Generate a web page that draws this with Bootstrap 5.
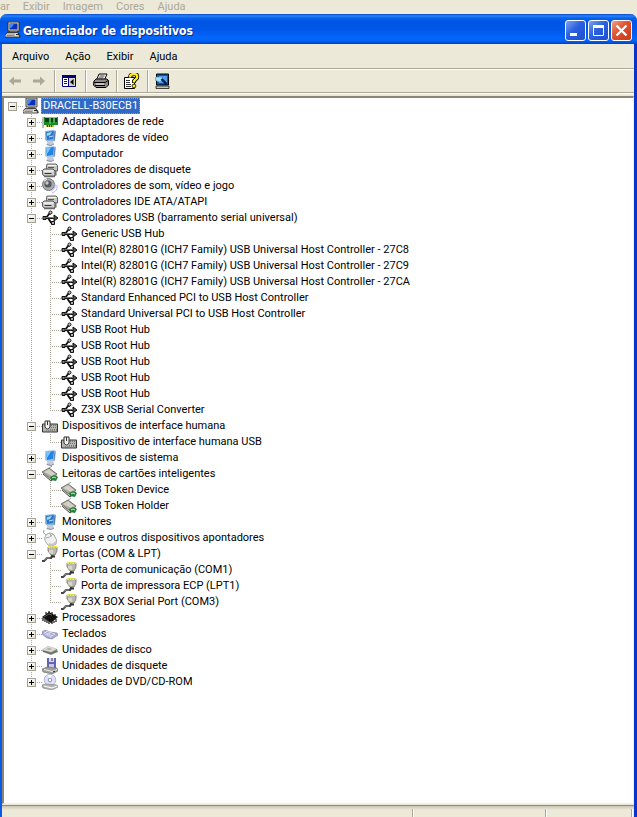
<!DOCTYPE html>
<html lang="pt-BR">
<head>
<meta charset="utf-8">
<meta name="viewport" content="width=device-width, initial-scale=1">
<title>Gerenciador de dispositivos</title>
<link href="https://cdn.jsdelivr.net/npm/bootstrap@5.3.0/dist/css/bootstrap.min.css" rel="stylesheet">
<style>
:root { --face:#ece9d8; --shade:#aca899; }
body { background:var(--face); color:#000; font-family:Roboto,sans-serif; font-size:11px; line-height:16px; }
.behind { height:14px; gap:13px; overflow:hidden; }
.behind a { color:var(--shade); line-height:14px; }
.win { border:solid; border-width:0 3px 0 2px; border-color:#1c62e4 #0a35c8 #1c62e4 #0a5ae8; border-radius:7px 7px 0 0; background:var(--face); }
.caption { height:30px; margin:0 -3px 0 -2px; padding:0 5px; border-radius:7px 7px 0 0; background:linear-gradient(#0a4ac8 0,#2a82f5 2px,#0862ee 4px,#0054e3 8px,#0058ea 16px,#0466fc 24px,#0262f4 27px,#0040c0 30px); }
.caption h1 { padding:4px 0 0 2px; font-family:"DejaVu Sans Condensed","DejaVu Sans",sans-serif; font-size:12px; font-weight:700; line-height:20px; color:#fff; text-shadow:1px 1px #0a2f8c; }
.caption .ico { margin-top:2px; }
.capbtns { gap:2px; padding-top:3px; }
.capbtn { width:21px; height:21px; border:1px solid #fff; border-radius:3px; background:linear-gradient(135deg,#7ca4f0,#2a5fe0 45%,#1e4fd0); }
.capbtn.closer { background:linear-gradient(135deg,#f0a088,#e0502c 45%,#c83c18); }
.etched { border-bottom:1px solid var(--shade); box-shadow:0 1px #fff; margin-bottom:1px; }
.menus { height:25px; padding:1px 0 0 2px; }
.menus .btn { padding:0 8px; font-size:11px; line-height:16px; color:#000; border:0; border-radius:0; }
.tools { height:23px; padding-left:2px; }
.tools .btn { width:23px; height:22px; border:0; border-radius:0; }
.tools .vr { width:1px; margin:0 3px 0 4px; background:var(--shade); opacity:1; box-shadow:1px 0 #fff; }
.pane { margin-top:2px; border:solid; border-width:2px 1px 1px 2px; border-color:#8a8778 #f1efe2 #f1efe2 #8a8778; background:#fff; }
.tree ul { padding-left:19px; }
.tree li li { background:repeating-linear-gradient(#aaa698 0 1px,transparent 1px 2px) 8px 0/1px 100% no-repeat; }
.tree li li:last-child { background-size:1px 9px; }
.branch { width:19px; height:16px; padding:4px 0 0 4px; background:repeating-linear-gradient(90deg,#aaa698 0 1px,transparent 1px 2px) 8px 8px/11px 1px no-repeat; }
.twist { display:block; position:relative; width:9px; height:9px; padding:0; border:1px solid #a5a294; border-radius:0; background:linear-gradient(135deg,#fff,#e4e0d2); }
.twist::before { content:""; position:absolute; left:1px; top:3px; width:5px; height:1px; background:#000; }
.twist.shut::after { content:""; position:absolute; left:3px; top:1px; width:1px; height:5px; background:#000; }
.ico { width:16px; height:16px; flex:none; overflow:visible; }
.name { margin-left:2px; padding:0 2px; color:#000; text-decoration:none; white-space:nowrap; }
.name.chosen { background:#316ac5; color:#fff; outline:1px dotted #ce953a; outline-offset:-1px; }
.status { height:12px; border-top:1px solid #8f8c7c; background:linear-gradient(#c9c6b6,var(--face) 4px); margin-top:1px; padding-right:2px; }
.status div { border-right:1px solid var(--shade); margin-top:3px; box-shadow:1px 0 #fff; }
.status .mid { width:133px; } .status .end { width:86px; }
</style>
</head>
<body class="d-flex flex-column min-vh-100">
<svg class="d-none" xmlns="http://www.w3.org/2000/svg">
<symbol id="pc" viewBox="0 0 16 16"><path d="M3 0h11v9H3z" fill="#d8d5c8" stroke="#222" stroke-width=".8"/><path d="M4.500 1.500h8v6h-8z" fill="#0a2fb8"/><path d="M5 2h4L6 6H5z" fill="#4a8af0"/><path d="M5 9h7v1.500H5z" fill="#666"/><path d="M2 10.500h11l2 3v1.500H0v-1.500z" fill="#e4e1d4" stroke="#222" stroke-width=".8"/><path d="M2 12h8M1.500 13.500h8" stroke="#777" stroke-width=".8"/><path d="M11 12.500h3M13 11l2 4" stroke="#222"/></symbol>
<symbol id="net" viewBox="0 0 16 16"><path d="M1 3v11" stroke="#777"/><path d="M2 3h14v8H2z" fill="#178a28"/><path d="M3 4h4v4H3zM9 4h2v4H9zM13 4h2v4h-2z" fill="#0a3d12"/><path d="M3 3.500h12M8 4v6M12 4v5" stroke="#7ad36a"/><path d="M4 11h8v2H4z" fill="#c9b43c"/><path d="M5.500 11v2M7.500 11v2M9.500 11v2" stroke="#14611c"/></symbol>
<symbol id="mon" viewBox="0 0 16 16"><path d="M3 1l9-1 2 1-1 10-7 1-3-2z" fill="#a9c8ea"/><path d="M4 2l8-1-1 8-6 1z" fill="#1f86e8"/><path d="M4 2l5-.6L5 8z" fill="#7cc4fb"/><path d="M6 11h5l1 3-3 2-5-1z" fill="#c7cbd8"/><path d="M5 14.500l4 1 3-1.500" stroke="#8b8fa4" fill="none"/><path d="M13 1.500l-1 9" stroke="#6484bc"/></symbol>
<symbol id="adp" viewBox="0 0 16 16"><path d="M3 1l9-1 2 1-1 10-7 1-3-2z" fill="#8eb2dc"/><path d="M4 2l8-1-1 8-6 1z" fill="#2679c9"/><path d="M5 3l5-1-2 3-3 1z" fill="#9ad4f6"/><path d="M7 7l4-1" stroke="#bfe4fa"/><path d="M6 11h5l1 3-3 2-5-1z" fill="#c7cbd8"/><path d="M5 14.500l4 1 3-1.500" stroke="#8b8fa4" fill="none"/><path d="M13 1.500l-1 9" stroke="#5878a8"/></symbol>
<symbol id="ctl" viewBox="0 0 16 16"><path d="M5 2h9l1.500 1.500V9h-11V3.500z" fill="#c4c4c2" stroke="#666"/><path d="M6 3.500h8" stroke="#f4f4f4"/><path d="M6 5.500h6" stroke="#555"/><path d="M2 7h9l2 2v5H2L.5 12V8.500z" fill="#cfcfcd" stroke="#555"/><path d="M2 9h9" stroke="#fff"/><path d="M2.500 11.500h7" stroke="#333"/><path d="M13.800 8.500v5M2 14.600h11" stroke="#666" stroke-width="1.400"/></symbol>
<symbol id="snd" viewBox="0 0 16 16"><circle cx="6.500" cy="6.500" r="6" fill="#a9aaac" stroke="#77797d"/><circle cx="6" cy="6" r="3.600" fill="#55585c"/><circle cx="5" cy="5" r="1.700" fill="#c6c8ca"/><path d="M2 3l3-2" stroke="#eee"/><path d="M13 6q1 5-4 7M15 7q1 6-5 8" stroke="#b5b4ee" fill="none"/></symbol>
<symbol id="usb" viewBox="0 0 16 16"><path d="M2 8h11M4 8l3.500-4.500H9M6 8l3 4.500h2" stroke="#111" stroke-width="1.800" fill="none"/><path d="M12 5L16 8l-4 3z" fill="#555" stroke="#111"/><path d="M1 6.500h3v3H1z" fill="#777" stroke="#111"/><path d="M4 7.600h8" stroke="#aaa" stroke-width=".7"/><circle cx="8.500" cy="2.500" r="1.500" fill="#ccc" stroke="#111"/><path d="M9.500 11.500h3v3h-3z" fill="#aaa" stroke="#111"/></symbol>
<symbol id="hid" viewBox="0 0 16 16"><path d="M.5 6h15v8H.5z" fill="#b4b4b0" stroke="#333"/><path d="M9 7.500h6M9 9.500h6M8 11.500h7M4 12.700h11" stroke="#777" stroke-dasharray="1 1"/><path d="M3 3h5v6q-2.500 4-5 0z" fill="#f2f2f0" stroke="#333"/><path d="M5.500 3v4" stroke="#333"/></symbol>
<symbol id="card" viewBox="0 0 16 16"><path d="M6 3l4-3" stroke="#999"/><path d="M0 6l7-4 8 6-5 6z" fill="#aaa89e" stroke="#5c5a52" stroke-width=".8"/><path d="M2 6l5-3 6 5-3 2z" fill="#d4d2c8"/><path d="M1 8l8 7 6-5" fill="none" stroke="#444"/><path d="M8 11l4-2 4 2-2 4-5-1z" fill="#23803a"/><path d="M10 12l2-1 2 1" stroke="#c5f3c0" fill="none"/></symbol>
<symbol id="mouse" viewBox="0 0 16 16"><path d="M4 5Q0 3 2 0" stroke="#999" fill="none"/><path d="M4 5q4-4 8 0 4 5 2 9-5 4-9 0-4-5-1-9z" fill="#f0f0ee" stroke="#a5a6ac"/><path d="M4 8q4 0 7-4M8 3l1 4" stroke="#aaa" fill="none"/><path d="M7 14q4 2 7-2" stroke="#c4c4ce" stroke-width="2" fill="none"/></symbol>
<symbol id="port" viewBox="0 0 16 16"><path d="M0 15h2l3-3h4l2-4" stroke="#444" stroke-width="2.200" fill="none"/><path d="M2 14l3-2h3" stroke="#aaa" stroke-width=".8" fill="none"/><path d="M6 1h9v4l-2 4H9L6 5z" fill="#bcbab0" stroke="#6f6e68" stroke-width=".8"/><path d="M8 4v3M10 4v4" stroke="#f2f1ea"/><path d="M6 1h9" stroke="#f1e63b" stroke-width="2" stroke-dasharray="2 .6"/><path d="M9 9.500h4v2H9z" fill="#333"/></symbol>
<symbol id="cpu" viewBox="0 0 16 16"><path d="M0 7l7-5 9 5-7 6z" fill="#111"/><path d="M1 8v3M3 9v3M5 10v3M7 11v3M10 12v2M12 11v2M14 9v3M4 2v2M7 1v2M10 2v2M13 4v2" stroke="#111" stroke-width="1.200"/><path d="M2 7l5-3 3 1" stroke="#777" fill="none" stroke-width=".7"/></symbol>
<symbol id="kbd" viewBox="0 0 16 16"><path d="M0 6l3-2 5 2 7 1 1 2-6 4-5-1-5-4z" fill="#a6a9d2" stroke="#8284a8" stroke-width=".7"/><path d="M2 6l9 4M4 5l9 3M3 8l6 3M5 9l4-3M8 11l5-3M2 8l3-3" stroke="#f4f4ff" stroke-width=".6"/></symbol>
<symbol id="hdd" viewBox="0 0 16 16"><path d="M0 8l6-4 9 3 1 3-7 3-8-3z" fill="#8c8c88"/><path d="M0 8l6-4 9 3-6 3z" fill="#dad9d2"/><path d="M4 7l3-1 3 1-2 1z" fill="#aaa"/><path d="M1 9l8 2.500 6-2.500" stroke="#666" fill="none"/><path d="M11 10h2" stroke="#5c9a50"/></symbol>
<symbol id="fdd" viewBox="0 0 16 16"><path d="M5 0h9v10H5z" fill="#6565ad"/><path d="M7 0h5v4H7z" fill="#dadaf0"/><path d="M7 6h5v4H7z" fill="#c8c8e8"/><path d="M10 0v3" stroke="#335"/><path d="M0 11l5-2 10 1 1 3-6 3-9-2z" fill="#a1a19c" stroke="#666" stroke-width=".6"/><path d="M2 11.500l8 2 5-2" stroke="#eee" fill="none"/><path d="M11 14l2-1" stroke="#222"/></symbol>
<symbol id="cd" viewBox="0 0 16 16"><circle cx="8" cy="6" r="5.800" fill="#dfe0f5" stroke="#a5a8ca" stroke-width=".8"/><path d="M8 6L6 1l4 0z" fill="#fff"/><circle cx="8" cy="6" r="1.800" fill="#fff" stroke="#8a8db4"/><path d="M0 11l4-1 11 1 1 2-6 3-9-2z" fill="#b5b5b3" stroke="#777" stroke-width=".6"/><path d="M2 12l8 2 5-2" stroke="#fff" fill="none"/></symbol>
<symbol id="back" viewBox="0 0 16 16"><path d="M1 8l5-4.500V6.500h7v3H6v3z" fill="#aca899"/></symbol>
<symbol id="fwd" viewBox="0 0 16 16"><path d="M14 8L9 3.500V6.500H2v3h7v3z" fill="#aca899"/></symbol>
<symbol id="panel" viewBox="0 0 16 16"><path d="M.5 2.500h13v11H.5z" fill="#fff" stroke="#000080"/><path d="M0 2h14v3H0z" fill="#000080"/><path d="M7 5h6v8H7z" fill="#d5d2c3"/><path d="M6.500 5v8" stroke="#000080"/><path d="M2 6.500h3M2 8.500h3M2 10.500h3" stroke="#222"/><path d="M11.500 6v6L8 9z" fill="#000"/></symbol>
<symbol id="print" viewBox="0 0 16 16"><path d="M6 1h8l-3 7H3z" fill="#fff" stroke="#000"/><path d="M6.500 3h5M5.500 5h5" stroke="#000" stroke-width=".8"/><path d="M1 8l2-2h11l1.500 1.500V12L13 14.500H3L.5 12z" fill="#8f8c84" stroke="#000"/><path d="M1 9.500h11l3-2M2 12.500h10" stroke="#000" fill="none"/><path d="M3 11h8" stroke="#fff"/></symbol>
<symbol id="help" viewBox="0 0 16 16"><path d="M.5 4.500h10v11H.5z" fill="#fff" stroke="#000"/><path d="M2 7.500h4M2 9.500h4M2 11.500h5M2 13.500h5" stroke="#333"/><path d="M6 5q0-4 4-4 4 0 3 4l-3 3v2" stroke="#000" stroke-width="4" fill="none"/><path d="M6 4.500q0-3.500 4-3.500 4 0 3 4l-3 3v1.500" stroke="#ffee12" stroke-width="2.400" fill="none"/><circle cx="10" cy="13" r="1.900" fill="#ffee12" stroke="#000" stroke-width=".8"/></symbol>
<symbol id="scan" viewBox="0 0 16 16"><path d="M1.500 1h12v11h-12z" fill="#1551b0" stroke="#000"/><path d="M4 3h8v7H4z" fill="#4f9fea"/><path d="M1 13h13v2.500H1z" fill="#c5c5bb" stroke="#000" stroke-width=".7"/><path d="M1 4h6v4L4 9 0 7z" fill="#a5e4fa" stroke="#3a9cd0" stroke-width=".7"/><path d="M6.500 6l5 5" stroke="#001a50" stroke-width="2.400"/></symbol>
</svg>

<nav class="behind d-flex" aria-label="Janela em segundo plano">
<a class="text-decoration-none" href="#">ar</a><a class="text-decoration-none" href="#">Exibir</a><a class="text-decoration-none" href="#">Imagem</a><a class="text-decoration-none" href="#">Cores</a><a class="text-decoration-none" href="#">Ajuda</a>
</nav>

<main class="win d-flex flex-column flex-grow-1">
<header class="caption d-flex align-items-center">
<svg class="ico"><use href="#pc"/></svg>
<h1 class="mb-0 me-auto text-nowrap">Gerenciador de dispositivos</h1>
<div class="capbtns d-flex">
<button class="btn p-0 capbtn d-flex" aria-label="Minimizar"><svg viewBox="0 0 19 19"><path d="M4 12h7v3H4z" fill="#fff"/></svg></button>
<button class="btn p-0 capbtn d-flex" aria-label="Maximizar"><svg viewBox="0 0 19 19"><path d="M4.500 5h10v9.500h-10z" fill="none" stroke="#fff"/><path d="M4 4h11v3H4z" fill="#fff"/></svg></button>
<button class="btn p-0 capbtn closer d-flex" aria-label="Fechar"><svg viewBox="0 0 19 19"><path d="M4.500 4.500l10 10M14.500 4.500l-10 10" stroke="#fff" stroke-width="2.200"/></svg></button>
</div>
</header>
<nav class="menus etched d-flex align-items-center" aria-label="Menu">
<button class="btn">Arquivo</button><button class="btn">Ação</button><button class="btn">Exibir</button><button class="btn">Ajuda</button>
</nav>
<div class="tools etched d-flex" role="toolbar" aria-label="Ferramentas">
<button class="btn p-0 d-flex align-items-center justify-content-center" aria-label="Voltar"><svg class="ico"><use href="#back"/></svg></button>
<button class="btn p-0 d-flex align-items-center justify-content-center" aria-label="Avançar"><svg class="ico"><use href="#fwd"/></svg></button>
<span class="vr"></span>
<button class="btn p-0 d-flex align-items-center justify-content-center" aria-label="Mostrar árvore"><svg class="ico"><use href="#panel"/></svg></button>
<span class="vr"></span>
<button class="btn p-0 d-flex align-items-center justify-content-center" aria-label="Imprimir"><svg class="ico"><use href="#print"/></svg></button>
<span class="vr"></span>
<button class="btn p-0 d-flex align-items-center justify-content-center" aria-label="Ajuda"><svg class="ico"><use href="#help"/></svg></button>
<span class="vr"></span>
<button class="btn p-0 d-flex align-items-center justify-content-center" aria-label="Verificar alterações"><svg class="ico"><use href="#scan"/></svg></button>
</div>

<section class="pane flex-grow-1">
<ul class="tree list-unstyled mb-0">
<li><div class="d-flex"><span class="branch"><button class="btn twist" aria-label="Recolher" data-bs-toggle="collapse" data-bs-target="#all"></button></span><svg class="ico"><use href="#pc"/></svg><a class="name chosen" href="#">DRACELL-B30ECB1</a></div>
<ul class="list-unstyled collapse show" id="all">
<li><div class="d-flex"><span class="branch"><button class="btn twist shut" aria-label="Expandir"></button></span><svg class="ico"><use href="#net"/></svg><a class="name" href="#">Adaptadores de rede</a></div></li>
<li><div class="d-flex"><span class="branch"><button class="btn twist shut" aria-label="Expandir"></button></span><svg class="ico"><use href="#adp"/></svg><a class="name" href="#">Adaptadores de vídeo</a></div></li>
<li><div class="d-flex"><span class="branch"><button class="btn twist shut" aria-label="Expandir"></button></span><svg class="ico"><use href="#mon"/></svg><a class="name" href="#">Computador</a></div></li>
<li><div class="d-flex"><span class="branch"><button class="btn twist shut" aria-label="Expandir"></button></span><svg class="ico"><use href="#ctl"/></svg><a class="name" href="#">Controladores de disquete</a></div></li>
<li><div class="d-flex"><span class="branch"><button class="btn twist shut" aria-label="Expandir"></button></span><svg class="ico"><use href="#snd"/></svg><a class="name" href="#">Controladores de som, vídeo e jogo</a></div></li>
<li><div class="d-flex"><span class="branch"><button class="btn twist shut" aria-label="Expandir"></button></span><svg class="ico"><use href="#ctl"/></svg><a class="name" href="#">Controladores IDE ATA/ATAPI</a></div></li>
<li><div class="d-flex"><span class="branch"><button class="btn twist" aria-label="Recolher" data-bs-toggle="collapse" data-bs-target="#usbs"></button></span><svg class="ico"><use href="#usb"/></svg><a class="name" href="#">Controladores USB (barramento serial universal)</a></div>
<ul class="list-unstyled collapse show" id="usbs">
<li><div class="d-flex"><span class="branch"></span><svg class="ico"><use href="#usb"/></svg><a class="name" href="#">Generic USB Hub</a></div></li>
<li><div class="d-flex"><span class="branch"></span><svg class="ico"><use href="#usb"/></svg><a class="name" href="#">Intel(R) 82801G (ICH7 Family) USB Universal Host Controller - 27C8</a></div></li>
<li><div class="d-flex"><span class="branch"></span><svg class="ico"><use href="#usb"/></svg><a class="name" href="#">Intel(R) 82801G (ICH7 Family) USB Universal Host Controller - 27C9</a></div></li>
<li><div class="d-flex"><span class="branch"></span><svg class="ico"><use href="#usb"/></svg><a class="name" href="#">Intel(R) 82801G (ICH7 Family) USB Universal Host Controller - 27CA</a></div></li>
<li><div class="d-flex"><span class="branch"></span><svg class="ico"><use href="#usb"/></svg><a class="name" href="#">Standard Enhanced PCI to USB Host Controller</a></div></li>
<li><div class="d-flex"><span class="branch"></span><svg class="ico"><use href="#usb"/></svg><a class="name" href="#">Standard Universal PCI to USB Host Controller</a></div></li>
<li><div class="d-flex"><span class="branch"></span><svg class="ico"><use href="#usb"/></svg><a class="name" href="#">USB Root Hub</a></div></li>
<li><div class="d-flex"><span class="branch"></span><svg class="ico"><use href="#usb"/></svg><a class="name" href="#">USB Root Hub</a></div></li>
<li><div class="d-flex"><span class="branch"></span><svg class="ico"><use href="#usb"/></svg><a class="name" href="#">USB Root Hub</a></div></li>
<li><div class="d-flex"><span class="branch"></span><svg class="ico"><use href="#usb"/></svg><a class="name" href="#">USB Root Hub</a></div></li>
<li><div class="d-flex"><span class="branch"></span><svg class="ico"><use href="#usb"/></svg><a class="name" href="#">USB Root Hub</a></div></li>
<li><div class="d-flex"><span class="branch"></span><svg class="ico"><use href="#usb"/></svg><a class="name" href="#">Z3X USB Serial Converter</a></div></li>
</ul></li>
<li><div class="d-flex"><span class="branch"><button class="btn twist" aria-label="Recolher" data-bs-toggle="collapse" data-bs-target="#hids"></button></span><svg class="ico"><use href="#hid"/></svg><a class="name" href="#">Dispositivos de interface humana</a></div>
<ul class="list-unstyled collapse show" id="hids">
<li><div class="d-flex"><span class="branch"></span><svg class="ico"><use href="#hid"/></svg><a class="name" href="#">Dispositivo de interface humana USB</a></div></li>
</ul></li>
<li><div class="d-flex"><span class="branch"><button class="btn twist shut" aria-label="Expandir"></button></span><svg class="ico"><use href="#mon"/></svg><a class="name" href="#">Dispositivos de sistema</a></div></li>
<li><div class="d-flex"><span class="branch"><button class="btn twist" aria-label="Recolher" data-bs-toggle="collapse" data-bs-target="#cards"></button></span><svg class="ico"><use href="#card"/></svg><a class="name" href="#">Leitoras de cartões inteligentes</a></div>
<ul class="list-unstyled collapse show" id="cards">
<li><div class="d-flex"><span class="branch"></span><svg class="ico"><use href="#card"/></svg><a class="name" href="#">USB Token Device</a></div></li>
<li><div class="d-flex"><span class="branch"></span><svg class="ico"><use href="#card"/></svg><a class="name" href="#">USB Token Holder</a></div></li>
</ul></li>
<li><div class="d-flex"><span class="branch"><button class="btn twist shut" aria-label="Expandir"></button></span><svg class="ico"><use href="#adp"/></svg><a class="name" href="#">Monitores</a></div></li>
<li><div class="d-flex"><span class="branch"><button class="btn twist shut" aria-label="Expandir"></button></span><svg class="ico"><use href="#mouse"/></svg><a class="name" href="#">Mouse e outros dispositivos apontadores</a></div></li>
<li><div class="d-flex"><span class="branch"><button class="btn twist" aria-label="Recolher" data-bs-toggle="collapse" data-bs-target="#ports"></button></span><svg class="ico"><use href="#port"/></svg><a class="name" href="#">Portas (COM &amp; LPT)</a></div>
<ul class="list-unstyled collapse show" id="ports">
<li><div class="d-flex"><span class="branch"></span><svg class="ico"><use href="#port"/></svg><a class="name" href="#">Porta de comunicação (COM1)</a></div></li>
<li><div class="d-flex"><span class="branch"></span><svg class="ico"><use href="#port"/></svg><a class="name" href="#">Porta de impressora ECP (LPT1)</a></div></li>
<li><div class="d-flex"><span class="branch"></span><svg class="ico"><use href="#port"/></svg><a class="name" href="#">Z3X BOX Serial Port (COM3)</a></div></li>
</ul></li>
<li><div class="d-flex"><span class="branch"><button class="btn twist shut" aria-label="Expandir"></button></span><svg class="ico"><use href="#cpu"/></svg><a class="name" href="#">Processadores</a></div></li>
<li><div class="d-flex"><span class="branch"><button class="btn twist shut" aria-label="Expandir"></button></span><svg class="ico"><use href="#kbd"/></svg><a class="name" href="#">Teclados</a></div></li>
<li><div class="d-flex"><span class="branch"><button class="btn twist shut" aria-label="Expandir"></button></span><svg class="ico"><use href="#hdd"/></svg><a class="name" href="#">Unidades de disco</a></div></li>
<li><div class="d-flex"><span class="branch"><button class="btn twist shut" aria-label="Expandir"></button></span><svg class="ico"><use href="#fdd"/></svg><a class="name" href="#">Unidades de disquete</a></div></li>
<li><div class="d-flex"><span class="branch"><button class="btn twist shut" aria-label="Expandir"></button></span><svg class="ico"><use href="#cd"/></svg><a class="name" href="#">Unidades de DVD/CD-ROM</a></div></li>
</ul></li>
</ul>
</section>
<footer class="status d-flex"><div class="flex-grow-1"></div><div class="mid"></div><div class="end"></div></footer>
</main>
<script src="https://cdn.jsdelivr.net/npm/bootstrap@5.3.0/dist/js/bootstrap.bundle.min.js"></script>
</body>
</html>
